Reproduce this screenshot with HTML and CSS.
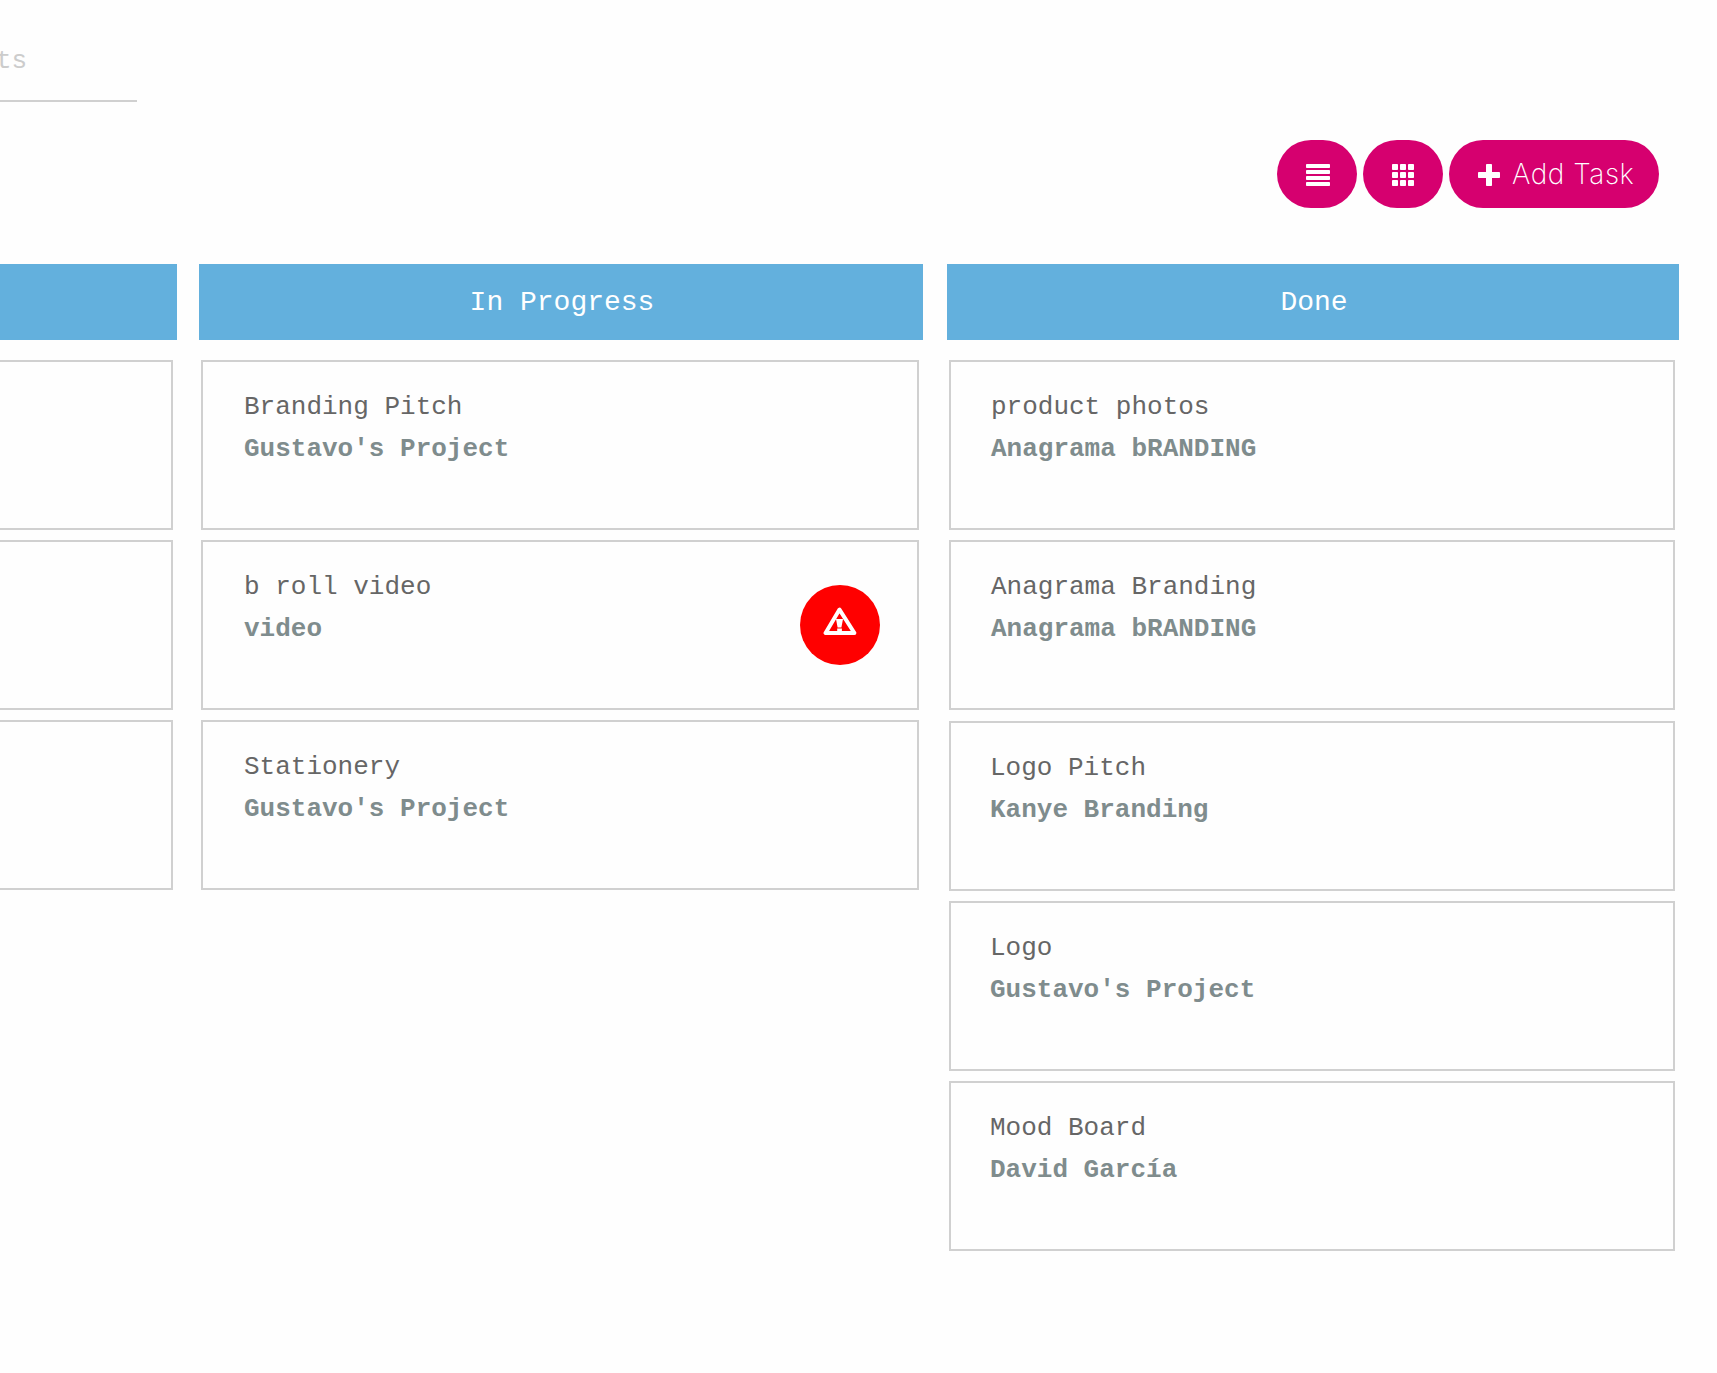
FILE: index.html
```html
<!DOCTYPE html>
<html lang="en">
<head>
<meta charset="utf-8">
<title>Tasks</title>
<link rel="stylesheet" href="styles.css">
</head>
<body>
<div class="search">ts</div>
<div class="toolbar">
  <button class="btn" aria-label="List view">
    <svg width="24" height="22" viewBox="0 0 24 22" fill="#fff"><rect width="24" height="4" rx=".8"/><rect y="6" width="24" height="4" rx=".8"/><rect y="12" width="24" height="4" rx=".8"/><rect y="18" width="24" height="4" rx=".8"/></svg>
  </button>
  <button class="btn btn-grid" aria-label="Grid view">
    <svg width="22" height="22" viewBox="0 0 22 22" fill="#fff"><rect width="6" height="6" rx=".8"/><rect x="8" width="6" height="6" rx=".8"/><rect x="16" width="6" height="6" rx=".8"/><rect y="8" width="6" height="6" rx=".8"/><rect x="8" y="8" width="6" height="6" rx=".8"/><rect x="16" y="8" width="6" height="6" rx=".8"/><rect y="16" width="6" height="6" rx=".8"/><rect x="8" y="16" width="6" height="6" rx=".8"/><rect x="16" y="16" width="6" height="6" rx=".8"/></svg>
  </button>
  <button class="btn btn-add">
    <svg width="22" height="22" viewBox="0 0 22 22" fill="#fff"><rect x="8" width="6" height="22" rx=".8"/><rect y="8" width="22" height="6" rx=".8"/></svg>
    <span class="btn-label">Add Task</span>
  </button>
</div>
<main class="board">
  <section class="column column-first">
    <header class="column-head"></header>
    <div class="cards">
      <article class="card"></article>
      <article class="card"></article>
      <article class="card"></article>
    </div>
  </section>
  <section class="column column-progress">
    <header class="column-head">In Progress</header>
    <div class="cards">
      <article class="card"><div><div class="title">Branding Pitch</div><div class="project">Gustavo's Project</div></div></article>
      <article class="card">
        <div><div class="title">b roll video</div><div class="project">video</div></div>
        <span class="alert">
          <svg width="34" height="28" viewBox="0 0 34 28"><path d="M16.5 2.6 L2.6 26 H31.4 Z" fill="none" stroke="#fff" stroke-width="4" stroke-linejoin="round"/><path d="M13 12h7l-1.6 8.4h-3.8zM14.2 21.5h4.7V25h-4.7z" fill="#fff"/></svg>
        </span>
      </article>
      <article class="card"><div><div class="title">Stationery</div><div class="project">Gustavo's Project</div></div></article>
    </div>
  </section>
  <section class="column">
    <header class="column-head">Done</header>
    <div class="cards">
      <article class="card"><div><div class="title">product photos</div><div class="project">Anagrama bRANDING</div></div></article>
      <article class="card"><div><div class="title">Anagrama Branding</div><div class="project">Anagrama bRANDING</div></div></article>
      <article class="card card-shifted"><div><div class="title">Logo Pitch</div><div class="project">Kanye Branding</div></div></article>
      <article class="card card-tight"><div><div class="title">Logo</div><div class="project">Gustavo's Project</div></div></article>
      <article class="card card-tight"><div><div class="title">Mood Board</div><div class="project">David García</div></div></article>
    </div>
  </section>
</main>
</body>
</html>
```
FILE: styles.css
```css
* { box-sizing: border-box; }
body {
  margin: 0;
  min-height: 1373px;
  background: #fefefe;
  font-family: "Courier New", "Liberation Mono", monospace;
  overflow: hidden;
}
.search {
  width: 137px;
  height: 102px;
  padding-top: 40px;
  border-bottom: 2px solid #d0d0d0;
  color: #ccc;
  font-size: 26px;
  line-height: 42px;
  text-indent: -4px;
}
.toolbar {
  display: flex;
  justify-content: flex-end;
  gap: 6px;
  padding: 38px 58px 0 0;
}
.btn {
  display: flex;
  align-items: center;
  justify-content: center;
  width: 80px;
  height: 68px;
  padding: 2px 0 0 2px;
  border: 0;
  border-radius: 34px;
  background: #d6006f;
  color: #fff;
}
.btn-grid { padding-left: 0; }
.btn-add {
  width: 210px;
  justify-content: flex-start;
  padding-left: 29px;
  gap: 12px;
}
.btn svg { flex: none; }
.btn-label {
  padding-bottom: 2px;
  font: 200 28px/34px Inter, sans-serif;
  letter-spacing: .55px;
  white-space: nowrap;
}
.board {
  display: grid;
  grid-template-columns: 177px 724px 732px;
  column-gap: 22px;
  padding-top: 56px;
}
.column:last-child { margin: 0 -2px 0 2px; }
.column-head {
  display: flex;
  align-items: center;
  justify-content: center;
  height: 76px;
  padding-left: 2px;
  background: #63b0dd;
  color: #fff;
  font-size: 28px;
}
.cards {
  display: flex;
  flex-direction: column;
  gap: 10px;
  padding: 20px 4px 0 2px;
}
.column-first .cards { padding-left: 0; }
.card {
  display: flex;
  justify-content: space-between;
  height: 170px;
  padding: 24px 37px 0 40px;
  border: 2px solid #d0d0d0;
  font-size: 26px;
  line-height: 42px;
}
.column-first .card { border-left: 0; }
.column-progress .card { padding-left: 41px; }
.card-shifted { margin-top: 1px; }
.card-shifted, .card-tight { padding-left: 39px; }
.title { color: #666; }
.project { color: #7f8c8d; font-weight: 700; }
.alert {
  display: flex;
  align-items: center;
  justify-content: center;
  width: 80px;
  height: 80px;
  margin-top: 19px;
  padding: 0 1px 8px 0;
  border-radius: 50%;
  background: #f00;
}
```
